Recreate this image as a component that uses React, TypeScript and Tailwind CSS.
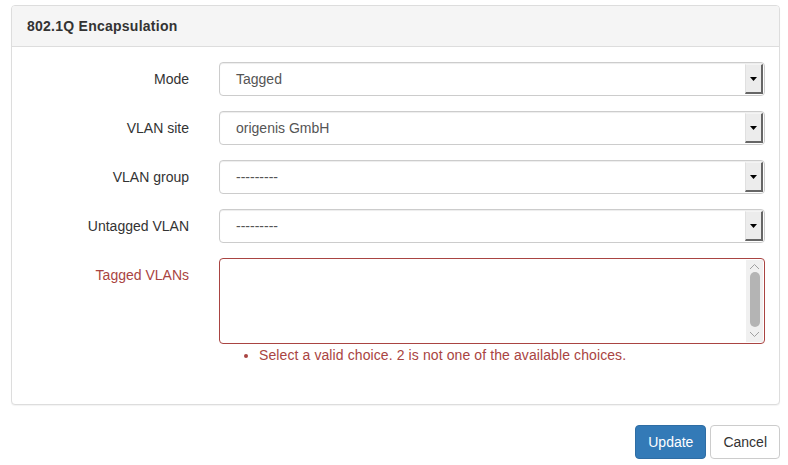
import React from "react";

const font = { fontFamily: '"Liberation Sans", Arial, sans-serif' };

function FakeSelect({ value }: { value: string }) {
  return (
    <div className="relative flex h-[34px] flex-1 items-center rounded-[4px] border border-[#cccccc] bg-white pl-4 text-[14px] text-[#555555] shadow-[inset_0_1px_1px_rgba(0,0,0,0.075)]">
      <span>{value}</span>
      <div className="absolute right-[1px] top-[1px] bottom-[1px] flex w-[18px] items-center justify-center border-r-2 border-b-2 border-[#666] bg-[#ececec] border-l border-l-[#e0e0e0] border-t border-t-[#f4f4f4]">
        <svg width="7" height="4" viewBox="0 0 7 4">
          <path d="M0 0h7L3.5 4z" fill="#000" />
        </svg>
      </div>
    </div>
  );
}

function Row({ label, value }: { label: string; value: string }) {
  return (
    <div className="mb-[15px] flex">
      <label className="w-[163px] pt-[7px] text-right text-[14px] leading-[20px] text-[#333333]">
        {label}
      </label>
      <div className="ml-[30px] flex flex-1">
        <FakeSelect value={value} />
      </div>
    </div>
  );
}

export default function App() {
  return (
    <div className="min-h-[465px] bg-white pl-[11px] pr-[8px] pt-[5px]" style={font}>
      <div className="rounded-[4px] border border-[#dddddd] bg-white shadow-[0_1px_1px_rgba(0,0,0,0.05)]">
        <div className="rounded-t-[3px] border-b border-[#dddddd] bg-[#f5f5f5] px-[15px] py-[10px] text-[14px] font-bold leading-[20px] tracking-[0.25px] text-[#333333]">
          802.1Q Encapsulation
        </div>
        <div className="pl-[14px] pr-[14px] pt-[15px] pb-[39px]">
          <Row label="Mode" value="Tagged" />
          <Row label="VLAN site" value="origenis GmbH" />
          <Row label="VLAN group" value="---------" />
          <Row label="Untagged VLAN" value="---------" />
          <div className="flex">
            <label className="w-[163px] pt-[7px] text-right text-[14px] leading-[20px] text-[#a94442]">
              Tagged VLANs
            </label>
            <div className="ml-[30px] flex-1">
              <div className="relative h-[86px] rounded-[4px] border border-[#a94442] bg-white">
                <div className="absolute right-[1px] top-[1px] bottom-[1px] flex w-[17px] flex-col items-center bg-[#f0f0f0]">
                  <svg width="11" height="7" viewBox="0 0 11 7" className="mt-[3px]">
                    <path d="M1 6l4.5-4.5L10 6" fill="none" stroke="#a0a0a0" strokeWidth="1" />
                  </svg>
                  <div className="mt-[2px] h-[55px] w-[10px] rounded-full bg-[#b4b4b4]" />
                  <svg width="11" height="7" viewBox="0 0 11 7" className="mt-[4px]">
                    <path d="M1 1l4.5 4.5L10 1" fill="none" stroke="#a0a0a0" strokeWidth="1" />
                  </svg>
                </div>
              </div>
              <ul className="mt-[1px] list-disc pl-[40px] text-[14px] leading-[20px] tracking-[0.1px] text-[#a94442]">
                <li>Select a valid choice. 2 is not one of the available choices.</li>
              </ul>
            </div>
          </div>
        </div>
      </div>
      <div className="mt-[20px] flex justify-end gap-[4px]">
        <button className="h-[34px] rounded-[4px] border border-[#2e6da4] bg-[#337ab7] px-[12px] text-[14px] text-white">
          Update
        </button>
        <button className="h-[34px] rounded-[4px] border border-[#cccccc] bg-white px-[12px] text-[14px] text-[#333333]">
          Cancel
        </button>
      </div>
    </div>
  );
}
